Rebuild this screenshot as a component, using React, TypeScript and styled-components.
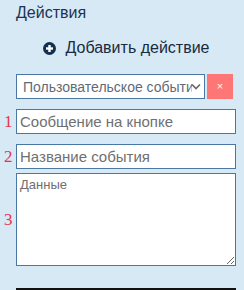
import React from 'react'
import styled, { createGlobalStyle } from 'styled-components'

const GlobalStyle = createGlobalStyle`
  html, body {
    margin: 0;
    padding: 0;
    background: #d6e9f5;
  }
  body {
    font-family: "Liberation Sans", Arial, sans-serif;
  }
`

const Panel = styled.div`
  width: 244px;
  height: 290px;
  box-sizing: border-box;
  padding: 3px 8px 0 16px;
  background: #d6e9f5;
  overflow: hidden;
`

const Title = styled.div`
  font-size: 16px;
  line-height: 20px;
  color: #1d3352;
`

const AddButton = styled.button`
  display: flex;
  align-items: center;
  justify-content: center;
  gap: 10px;
  width: 100%;
  height: 24px;
  margin-top: 13px;
  padding: 0;
  border: none;
  background: transparent;
  font-family: "Liberation Sans", Arial, sans-serif;
  font-size: 16px;
  color: #1a2a40;
  cursor: pointer;
`

const SelectRow = styled.div`
  display: flex;
  gap: 2px;
  margin-top: 14px;
`

const SelectWrap = styled.div`
  position: relative;
  width: 189px;
  height: 25px;
`

const Select = styled.select`
  appearance: none;
  width: 100%;
  height: 100%;
  box-sizing: border-box;
  border: 1px solid #4a78a5;
  border-radius: 0;
  background: #fff;
  padding: 0 12px 0 6px;
  font-family: "Liberation Sans", Arial, sans-serif;
  font-size: 14px;
  color: #5f6b78;
  outline: none;
`

const Chevron = styled.svg`
  position: absolute;
  right: 4px;
  top: 9px;
  pointer-events: none;
`

const RemoveButton = styled.button`
  width: 26px;
  height: 25px;
  border: none;
  padding: 0;
  background: #ff7676;
  color: #fff;
  font-size: 11px;
  line-height: 25px;
  font-family: "Liberation Sans", Arial, sans-serif;
`

const Field = styled.div<{ $gap: number }>`
  display: grid;
  grid-template-columns: 16px 1fr;
  align-items: center;
  margin-top: ${p => p.$gap}px;
  margin-left: -16px;
`

const Num = styled.span`
  font-family: "Liberation Serif", "Times New Roman", serif;
  font-size: 17px;
  color: #e8344a;
  text-align: left;
  padding-left: 4px;
`

const Input = styled.input`
  display: block;
  width: 100%;
  height: 25px;
  box-sizing: border-box;
  border: 1px solid #4a78a5;
  border-radius: 0;
  padding: 0 3px;
  font-family: "Liberation Sans", Arial, sans-serif;
  font-size: 15px;
  background: #fff;
  outline: none;
  &::placeholder {
    color: #707070;
  }
`

const TextArea = styled.textarea`
  display: block;
  width: 100%;
  height: 93px;
  box-sizing: border-box;
  border: 1px solid #4a78a5;
  border-radius: 0;
  padding: 3px 3px;
  font-family: "Liberation Sans", Arial, sans-serif;
  font-size: 13px;
  background: #fff;
  outline: none;
  &::placeholder {
    color: #707070;
  }
`

const Divider = styled.div`
  height: 2px;
  background: #111;
  margin-top: 22px;
`

const App = () => {
  return (
    <>
      <GlobalStyle />
      <Panel>
        <Title>Действия</Title>

        <AddButton>
          <svg width="13" height="13" viewBox="0 0 13 13">
            <circle cx="6.5" cy="6.5" r="6.5" fill="#14304f" />
            <rect x="5.3" y="3" width="2.4" height="7" fill="#fff" />
            <rect x="3" y="5.3" width="7" height="2.4" fill="#fff" />
          </svg>
          Добавить действие
        </AddButton>

        <SelectRow>
          <SelectWrap>
            <Select defaultValue="custom">
              <option value="custom">Пользовательское событие</option>
            </Select>
            <Chevron width="10" height="7" viewBox="0 0 10 7">
              <path d="M1 1.5 L5 5.5 L9 1.5" fill="none" stroke="#666" strokeWidth="1.6" />
            </Chevron>
          </SelectWrap>
          <RemoveButton>×</RemoveButton>
        </SelectRow>

        <Field $gap={10}>
          <Num>1</Num>
          <Input placeholder="Сообщение на кнопке" />
        </Field>

        <Field $gap={10}>
          <Num>2</Num>
          <Input placeholder="Название события" />
        </Field>

        <Field $gap={4}>
          <Num>3</Num>
          <TextArea placeholder="Данные" />
        </Field>

        <Divider />
      </Panel>
    </>
  )
}

export default App
